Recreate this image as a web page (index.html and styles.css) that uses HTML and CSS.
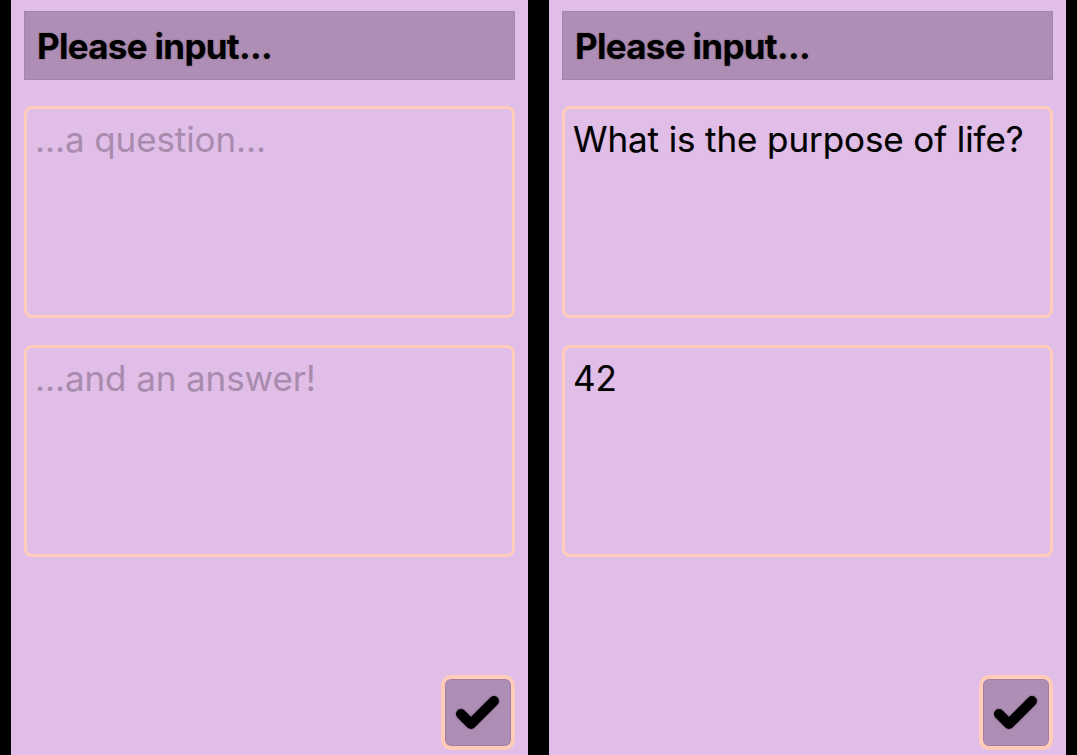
FILE: index.html
```html
<!DOCTYPE html>
<html lang="en">
<head>
<meta charset="utf-8">
<title>Please input</title>
<link rel="stylesheet" href="styles.css">
</head>
<body>
<div class="screens">
  <section class="panel">
    <div class="header">Please input...</div>
    <div class="field placeholder">...a question...</div>
    <div class="field placeholder">...and an answer!</div>
    <div class="actions">
      <button class="confirm" aria-label="Confirm">
        <svg width="74" height="74" viewBox="0 0 74 74"><polyline points="20,38 30,48 53,25" fill="none" stroke="#000" stroke-width="10" stroke-linecap="round" stroke-linejoin="round"/></svg>
      </button>
    </div>
  </section>
  <section class="panel">
    <div class="header">Please input...</div>
    <div class="field">What is the purpose of life?</div>
    <div class="field">42</div>
    <div class="actions">
      <button class="confirm" aria-label="Confirm">
        <svg width="74" height="74" viewBox="0 0 74 74"><polyline points="20,38 30,48 53,25" fill="none" stroke="#000" stroke-width="10" stroke-linecap="round" stroke-linejoin="round"/></svg>
      </button>
    </div>
  </section>
</div>
</body>
</html>
```

FILE: styles.css
```css
html, body {
  margin: 0;
  padding: 0;
  background: #000;
  height: 100%;
}

.screens {
  display: flex;
  gap: 21px;
  padding: 0 11px;
  height: 755px;
  box-sizing: border-box;
}

.panel {
  flex: 1;
  background: #e1bee7;
  padding: 11px 13px 5px;
  display: flex;
  flex-direction: column;
  font-family: Inter, "Noto Sans", sans-serif;
}

.header {
  height: 69px;
  box-sizing: border-box;
  background: #af8eb5;
  border: 1px solid #a584ab;
  display: flex;
  align-items: center;
  padding-left: 12px;
  font-weight: 700;
  font-size: 35px;
  letter-spacing: -0.7px;
  color: #000;
  text-shadow: 0 0 2px rgba(0, 0, 0, 0.35);
  margin-bottom: 26px;
}

.field {
  height: 212px;
  box-sizing: border-box;
  border: 3px solid #ffccbc;
  border-radius: 8px;
  padding: 9px 8px;
  font-size: 35px;
  letter-spacing: -0.1px;
  line-height: 42px;
  color: #000;
  text-shadow: 0 0 1px rgba(0, 0, 0, 0.25);
  margin-bottom: 27px;
}

.field.placeholder {
  color: #a88bad;
  text-shadow: none;
}

.actions {
  margin-top: auto;
  display: flex;
  justify-content: flex-end;
}

.confirm {
  width: 74px;
  height: 75px;
  padding: 0;
  box-sizing: border-box;
  background: #af8eb5;
  border: 4px solid #ffccbc;
  border-radius: 10px;
  box-shadow: inset 0 0 0 1px #9f7fa5;
  display: flex;
  align-items: center;
  justify-content: center;
  overflow: hidden;
}

.confirm svg {
  flex: none;
  filter: drop-shadow(0 0 1px rgba(0, 0, 0, 0.4));
}
```
